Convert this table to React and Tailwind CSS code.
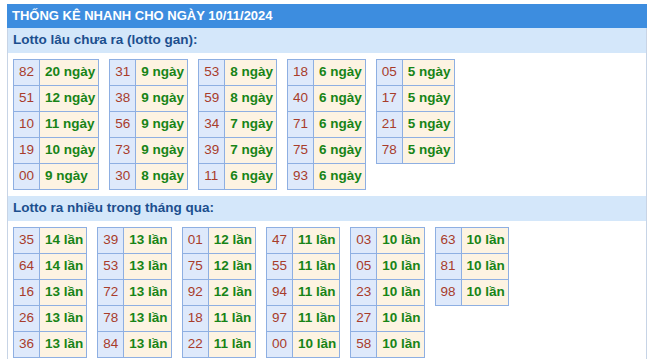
import React from "react";

const gan = [
  [["82", "20 ngày"], ["51", "12 ngày"], ["10", "11 ngày"], ["19", "10 ngày"], ["00", "9 ngày"]],
  [["31", "9 ngày"], ["38", "9 ngày"], ["56", "9 ngày"], ["73", "9 ngày"], ["30", "8 ngày"]],
  [["53", "8 ngày"], ["59", "8 ngày"], ["34", "7 ngày"], ["39", "7 ngày"], ["11", "6 ngày"]],
  [["18", "6 ngày"], ["40", "6 ngày"], ["71", "6 ngày"], ["75", "6 ngày"], ["93", "6 ngày"]],
  [["05", "5 ngày"], ["17", "5 ngày"], ["21", "5 ngày"], ["78", "5 ngày"]],
];

const nhieu = [
  [["35", "14 lần"], ["64", "14 lần"], ["16", "13 lần"], ["26", "13 lần"], ["36", "13 lần"]],
  [["39", "13 lần"], ["53", "13 lần"], ["72", "13 lần"], ["78", "13 lần"], ["84", "13 lần"]],
  [["01", "12 lần"], ["75", "12 lần"], ["92", "12 lần"], ["18", "11 lần"], ["22", "11 lần"]],
  [["47", "11 lần"], ["55", "11 lần"], ["94", "11 lần"], ["97", "11 lần"], ["00", "10 lần"]],
  [["03", "10 lần"], ["05", "10 lần"], ["23", "10 lần"], ["27", "10 lần"], ["58", "10 lần"]],
  [["63", "10 lần"], ["81", "10 lần"], ["98", "10 lần"]],
];

function LotoTable({ rows }) {
  return (
    <table className="border-collapse border border-[#8eafe2] self-start">
      <tbody>
        {rows.map(([n, v]) => (
          <tr key={n + v} className="h-[26px]">
            <td className="border border-[#8eafe2] bg-[#dee9fb] px-[5px] py-0 text-[#a83c2b] text-left">{n}</td>
            <td className="border border-[#8eafe2] bg-[#fdf3e2] pl-[5px] pr-[3px] py-0 text-[#178417] font-bold text-left whitespace-nowrap">{v}</td>
          </tr>
        ))}
      </tbody>
    </table>
  );
}

function Section({ title, tables, gap }) {
  return (
    <div>
      <div className="h-[25px] bg-[#d4e7fa] flex items-center pl-[5px] text-[13.5px] font-bold text-[#1c4f8e]">{title}</div>
      <div className={`flex items-start px-[5px] py-[6px] ${gap}`}>
        {tables.map((t, i) => (
          <LotoTable key={i} rows={t} />
        ))}
      </div>
    </div>
  );
}

export default function App() {
  return (
    <div className="bg-white w-[657px] h-[359px] overflow-hidden pt-[4px] pl-[7px]" style={{ fontFamily: '"Liberation Sans", Arial, sans-serif' }}>
      <div className="w-[640px] border-x border-[#c7d4e6] text-[13.5px]">
        <div className="-mx-px h-[24px] bg-[#3d8ddf] flex items-center pl-[5px] text-white font-bold text-[13px]">
          THỐNG KÊ NHANH CHO NGÀY 10/11/2024
        </div>
        <Section title="Lotto lâu chưa ra (lotto gan):" tables={gan} gap="gap-[10px]" />
        <Section title="Lotto ra nhiều trong tháng qua:" tables={nhieu} gap="gap-[10px]" />
      </div>
    </div>
  );
}
